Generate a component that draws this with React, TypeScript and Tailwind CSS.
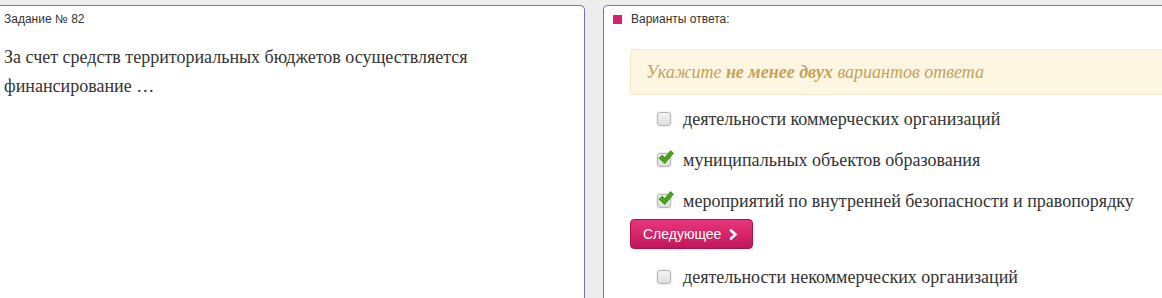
import React from "react";

function Box({ checked }: { checked?: boolean }) {
  return (
    <span className="relative inline-block w-[14px] h-[14px] shrink-0">
      <span className="absolute inset-0 rounded-[3px] border border-[#b5b5b5] bg-gradient-to-b from-[#f4f4f4] to-[#dedede] shadow-[0_0_1px_1px_rgba(0,0,0,0.06)]" />
      {checked && (
        <svg className="absolute left-[1px] top-[-3px]" width="16" height="15" viewBox="0 0 16 15">
          <path d="M0.8 8.2 L4.2 5 L6.6 7.6 L12.6 0.6 L15.6 3.2 L6.8 13.6 Z" fill="#4aa31e" stroke="#3b8a15" strokeWidth="0.7" strokeLinejoin="round" />
        </svg>
      )}
    </span>
  );
}

function Row({ label, checked, className = "" }: { label: string; checked?: boolean; className?: string }) {
  return (
    <div className={"flex items-center h-[24px] ml-[27px] gap-[12px] " + className}>
      <Box checked={checked} />
      <span className="font-['Liberation_Serif',serif] text-[18px] leading-[24px] text-[#333]">{label}</span>
    </div>
  );
}

export default function App() {
  return (
    <div className="w-[1162px] h-[298px] overflow-hidden bg-[#ededed] pt-[5px] flex gap-[18px]">
      <div className="w-[585px] shrink-0 bg-white border-t border-r border-[#7272c9] rounded-tr-[5px] pl-[4px]">
        <div className="font-['Liberation_Sans',sans-serif] text-[12px] leading-[20px] text-[#333] pt-[3px]">Задание № 82</div>
        <div className="font-['Liberation_Serif',serif] text-[18px] leading-[29px] text-[#333] mt-[14px] w-[520px]">
          За счет средств территориальных бюджетов осуществляется финансирование …
        </div>
      </div>
      <div className="flex-1 bg-white border-t border-l border-[#7272c9] rounded-tl-[5px] pl-[26px]">
        <div className="flex items-center h-[20px] mt-[3px] -ml-[17px] gap-[9px]">
          <span className="w-[9px] h-[9px] bg-[#d6216c]" />
          <span className="font-['Liberation_Sans',sans-serif] text-[12px] text-[#333]">Варианты ответа:</span>
        </div>
        <div className="mt-[20px] h-[46px] border border-r-0 border-[#f3e8c8] bg-[#fcf6e3] rounded-l-[4px] flex items-center pl-[15px]">
          <span className="font-['Liberation_Serif',serif] italic text-[18px] text-[#c9a257]">
            Укажите <b>не менее двух</b> вариантов ответа
          </span>
        </div>
        <Row className="mt-[12px]" label="деятельности коммерческих организаций" />
        <Row className="mt-[17px]" checked label="муниципальных объектов образования" />
        <Row className="mt-[17px]" checked label="мероприятий по внутренней безопасности и правопорядку" />
        <button className="mt-[6px] h-[30px] w-[123px] rounded-[4px] border border-[#b3104e] bg-gradient-to-b from-[#e8357b] to-[#c2145a] flex items-center pl-[12px] gap-[8px] text-white font-['Liberation_Sans',sans-serif] text-[14px]">
          <span>Следующее</span>
          <svg width="9" height="11" viewBox="0 0 9 11">
            <path d="M2 1.5 L6.5 5.5 L2 9.5" fill="none" stroke="white" strokeWidth="2.6" strokeLinecap="round" strokeLinejoin="round" />
          </svg>
        </button>
        <Row className="mt-[16px]" label="деятельности некоммерческих организаций" />
      </div>
    </div>
  );
}
